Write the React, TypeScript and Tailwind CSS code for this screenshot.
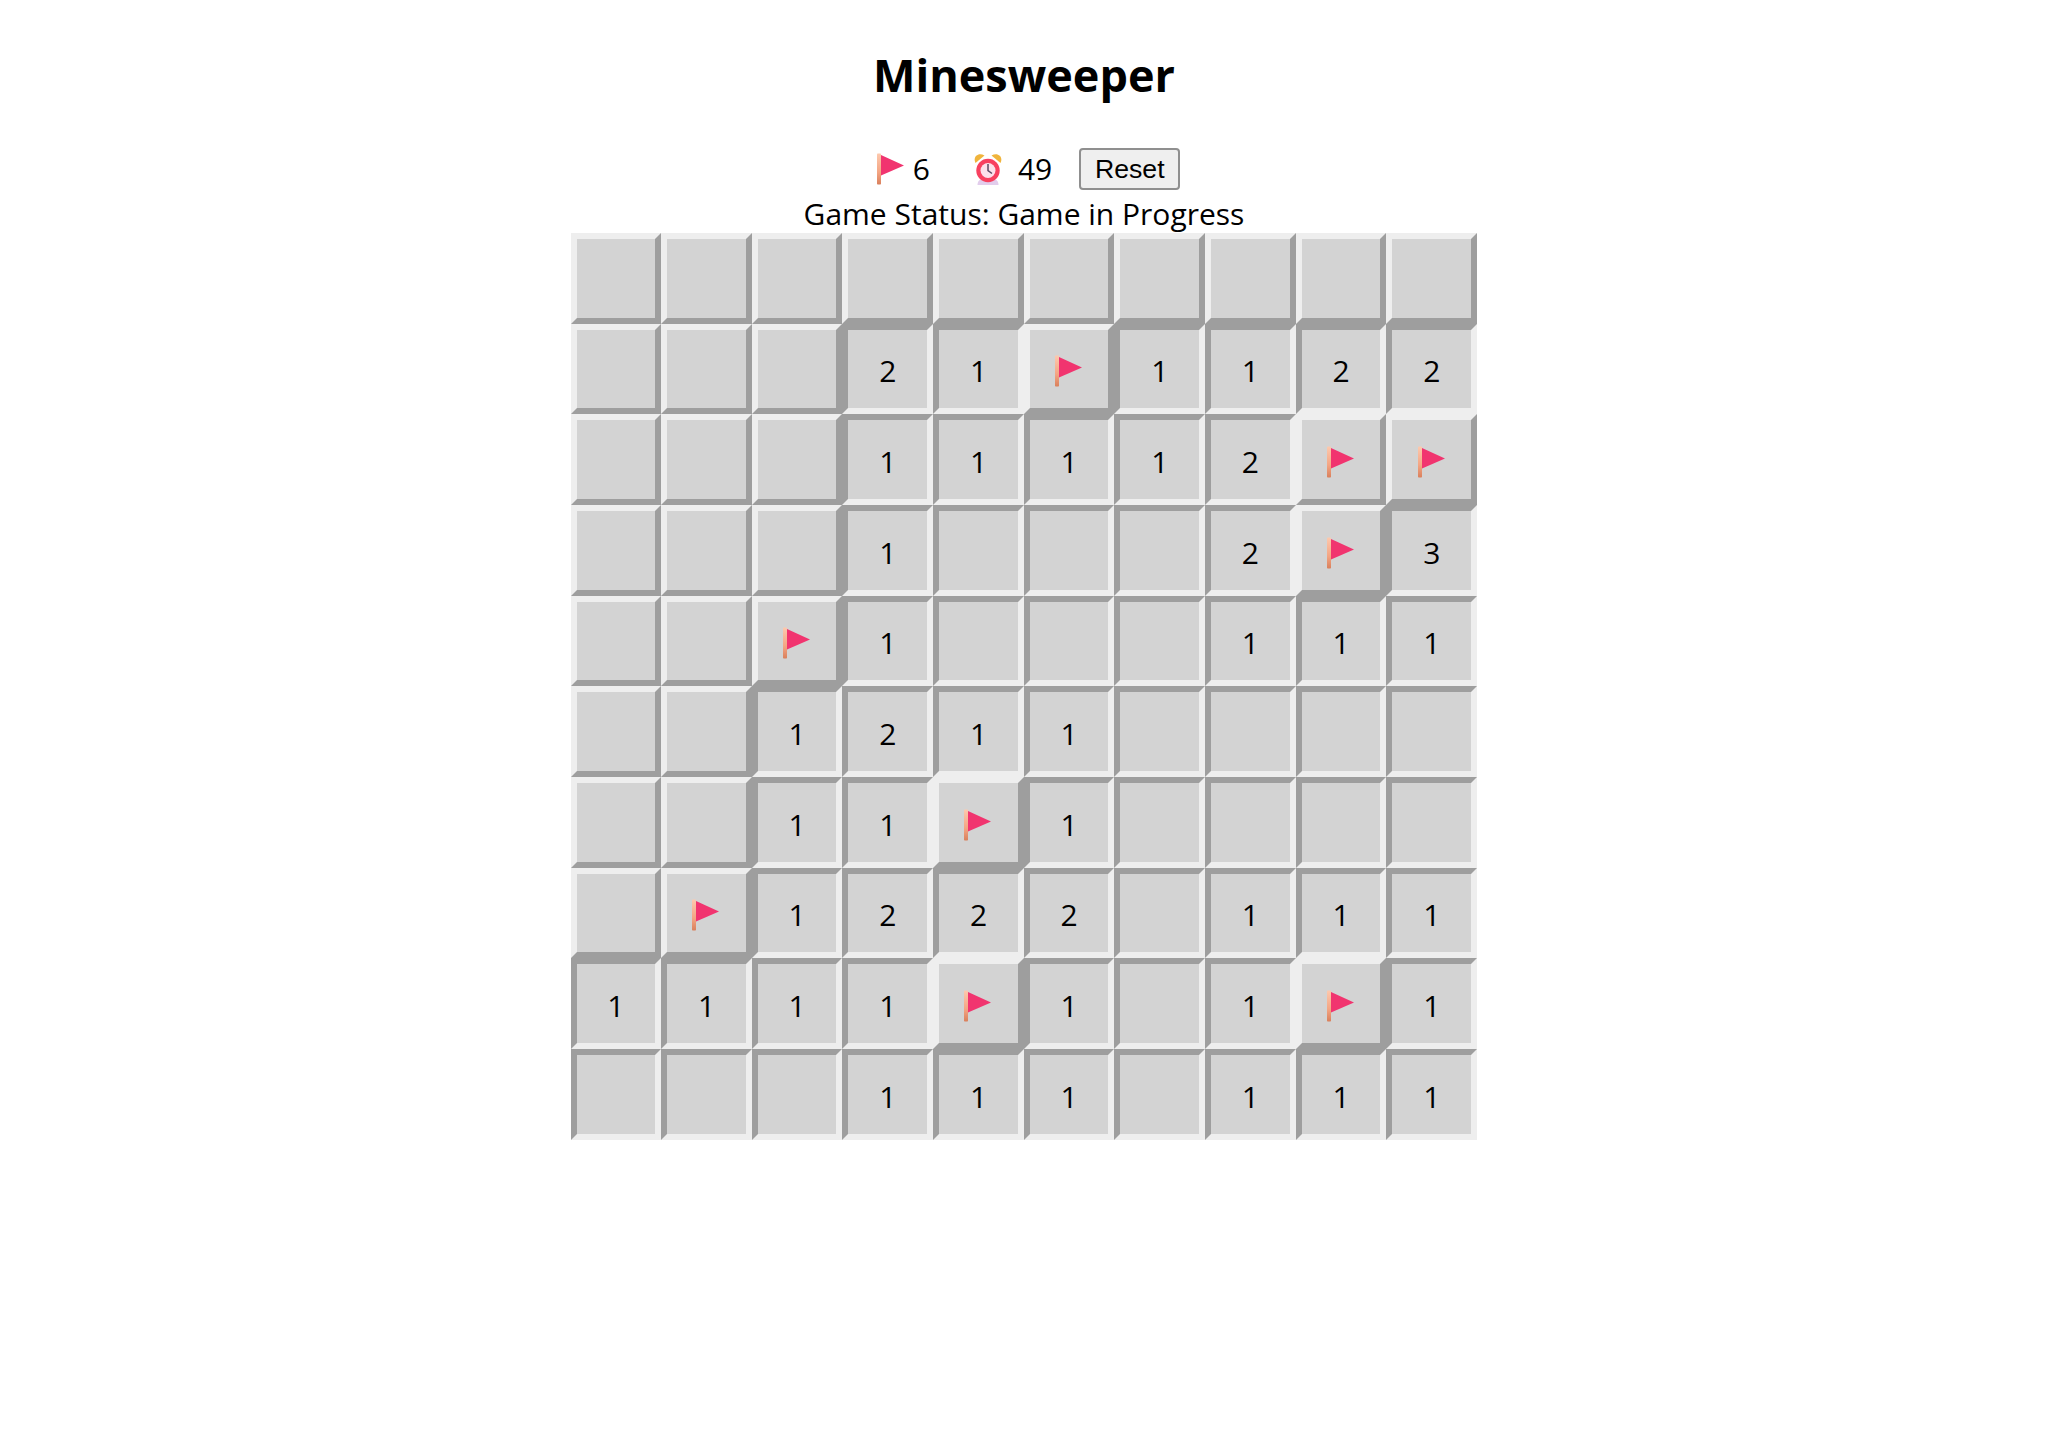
const board = [
  "##########",
  "###21F1122",
  "###11112FF",
  "###1___2F3",
  "##F1___111",
  "##1211____",
  "##11F1____",
  "#F1222_111",
  "1111F1_1F1",
  "___111_111",
];

function FlagIcon() {
  return (
    <svg width="28" height="32" viewBox="0 0 28 32" className="shrink-0">
      <defs>
        <linearGradient id="pole" x1="0" y1="0" x2="0" y2="1">
          <stop offset="0" stopColor="#fdc9ae" />
          <stop offset="0.6" stopColor="#f4a583" />
          <stop offset="1" stopColor="#d9805c" />
        </linearGradient>
      </defs>
      <rect x="0" y="0.5" width="4" height="31" rx="0.8" fill="url(#pole)" />
      <path d="M4 2 L27 12.5 L4 22.5 Z" fill="#f1346f" />
    </svg>
  );
}

function ClockIcon() {
  return (
    <svg width="28" height="32" viewBox="0 0 28 32" className="shrink-0">
      <path d="M1.5 10 C-1.5 4 4 -1 10.5 2.5 Z" fill="#f0b43c" />
      <path d="M26.5 10 C29.5 4 24 -1 17.5 2.5 Z" fill="#f0b43c" />
      <path d="M3.5 32 C3.5 28 6 26 9 26 H19 C22 26 24.5 28 24.5 32 Z" fill="#e2cdec" />
      <circle cx="14" cy="17.5" r="11.7" fill="#f8405f" />
      <circle cx="14" cy="17.5" r="7.5" fill="#fce0ea" />
      <path d="M14 11 V17.5 L18 20.5" stroke="#5b4a63" strokeWidth="1.5" fill="none" />
    </svg>
  );
}

function Cell({ value }: { value: string }) {
  const raised = value === "#" || value === "F";
  return (
    <div
      className={
        raised
          ? "flex h-[90.67px] w-[90.67px] items-center justify-center border-[6px] border-t-[#eeeeee] border-r-[#9e9e9e] border-b-[#9e9e9e] border-l-[#eeeeee] bg-[#d3d3d3] pt-[5px]"
          : "flex h-[90.67px] w-[90.67px] items-center justify-center border-[6px] border-t-[#9e9e9e] border-r-[#eeeeee] border-b-[#eeeeee] border-l-[#9e9e9e] bg-[#d3d3d3] pt-[5px]"
      }
    >
      {value === "F" ? <FlagIcon /> : value === "#" || value === "_" ? null : value}
    </div>
  );
}

export default function App() {
  return (
    <div className="min-h-[1452px] bg-white pt-[43px] text-center font-['Open_Sans','Noto_Sans',sans-serif] text-[30px] leading-[42px] text-black">
      <h1 className="text-[45px] leading-[64px] font-bold">Minesweeper</h1>
      <div className="mt-[38px] flex h-[48px] items-center justify-center pl-[9px]">
        <FlagIcon />
        <span className="ml-[8px]">6</span>
        <span className="ml-[44px]"><ClockIcon /></span>
        <span className="ml-[16px]">49</span>
        <button className="ml-[27px] h-[42px] w-[101px] rounded-[4px] border-2 border-[#8f8f8f] bg-[#efefef] font-['Liberation_Sans',sans-serif] text-[26.67px] leading-none">
          Reset
        </button>
      </div>
      <p className="h-[40px]">Game Status: Game in Progress</p>
      <div className="mx-auto grid w-[907px] grid-cols-[repeat(10,90.67px)]">
        {board.flatMap((row, r) =>
          row.split("").map((value, c) => <Cell key={`${r}-${c}`} value={value} />)
        )}
      </div>
    </div>
  );
}
